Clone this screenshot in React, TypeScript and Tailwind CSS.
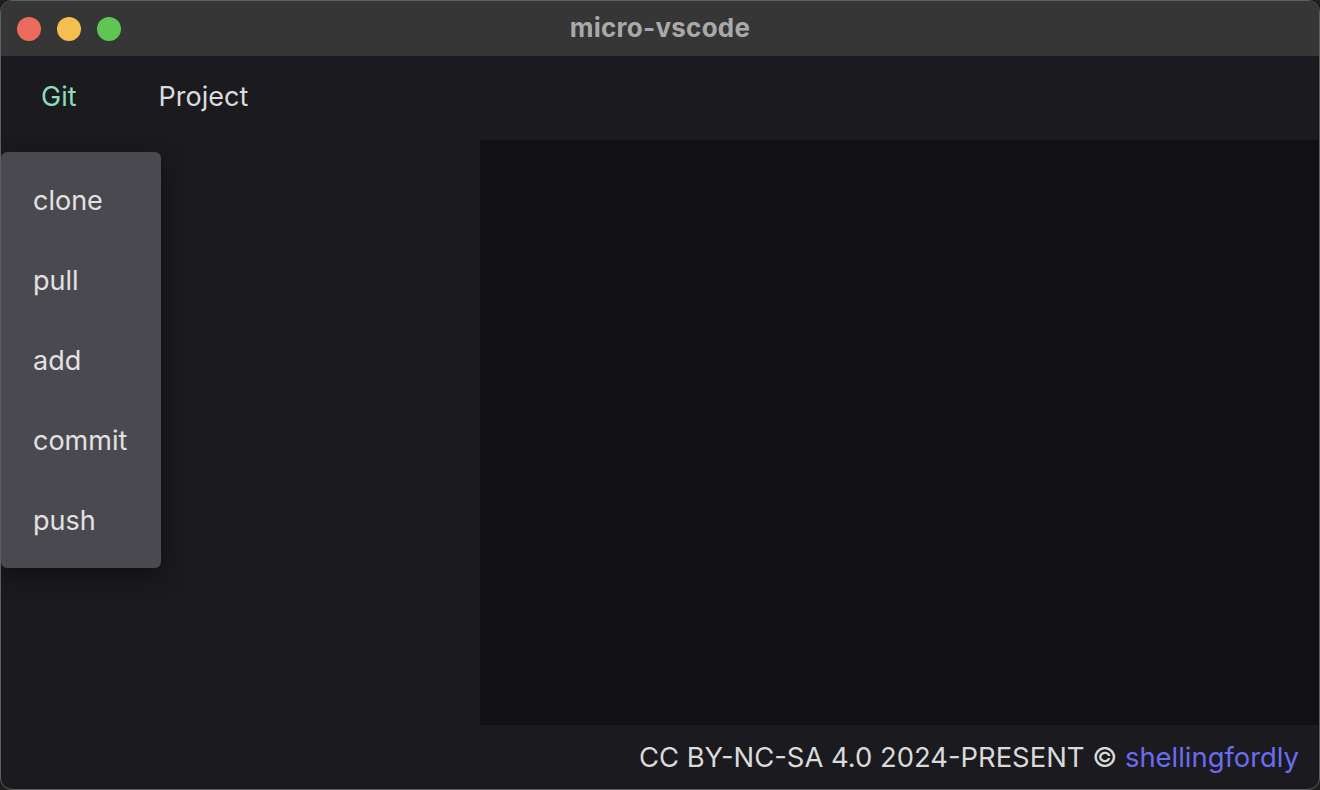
import React from 'react';

const GIT_ACTIONS = ['clone', 'pull', 'add', 'commit', 'push'];

const TrafficLights: React.FC = () => (
  <div className="absolute left-[16px] top-[16px] flex gap-[16px]">
    <span className="block w-[24px] h-[24px] rounded-full bg-[#ec6a5e]" />
    <span className="block w-[24px] h-[24px] rounded-full bg-[#f4bf4f]" />
    <span className="block w-[24px] h-[24px] rounded-full bg-[#61c554]" />
  </div>
);

const App: React.FC = () => {
  return (
    <div
      className="w-[1320px] h-[790px] bg-[#1e1e1e]"
      style={{ fontFamily: 'Inter, "Noto Sans", sans-serif' }}
    >
      <div className="relative w-full h-full flex flex-col rounded-[12px] border border-[#5e5e5e] overflow-hidden bg-[#1b1a1f]">
        {/* title bar */}
        <div className="relative h-[55px] shrink-0 bg-[#363636] flex items-center justify-center pb-[2px]">
          <TrafficLights />
          <span className="text-[26px] font-bold text-[#a9a9a9] tracking-[0.01em]">micro-vscode</span>
        </div>

        {/* menu bar */}
        <div className="h-[84px] shrink-0 flex items-center pl-[40px] gap-[82px] text-[27px] pb-[2px]">
          <span className="text-[#86dfbf]">Git</span>
          <span className="text-[#dcdcdc]">Project</span>
        </div>

        {/* body */}
        <div className="relative flex-1 flex">
          <div className="w-[479px] shrink-0" />
          <div className="flex-1 bg-[#111115]" />

          {/* git dropdown */}
          <div className="absolute left-0 top-[12px] w-[160px] rounded-[6px] bg-[#4a494f] py-[8px] shadow-[0_8px_24px_rgba(0,0,0,0.45)]">
            {GIT_ACTIONS.map((a) => (
              <div key={a} className="h-[80px] flex items-center pl-[32px] text-[27px] text-[#e2e2e2] pt-[2px]">
                {a}
              </div>
            ))}
          </div>
        </div>

        {/* footer */}
        <div className="h-[64px] shrink-0 flex items-center justify-end pr-[20px] text-[27.4px] text-[#dadada] pt-[2px]">
          <span>
            CC BY-NC-SA 4.0 2024-PRESENT ©{' '}
            <span className="text-[#6b6cf0]">shellingfordly</span>
          </span>
        </div>
      </div>
    </div>
  );
};

export default App;
